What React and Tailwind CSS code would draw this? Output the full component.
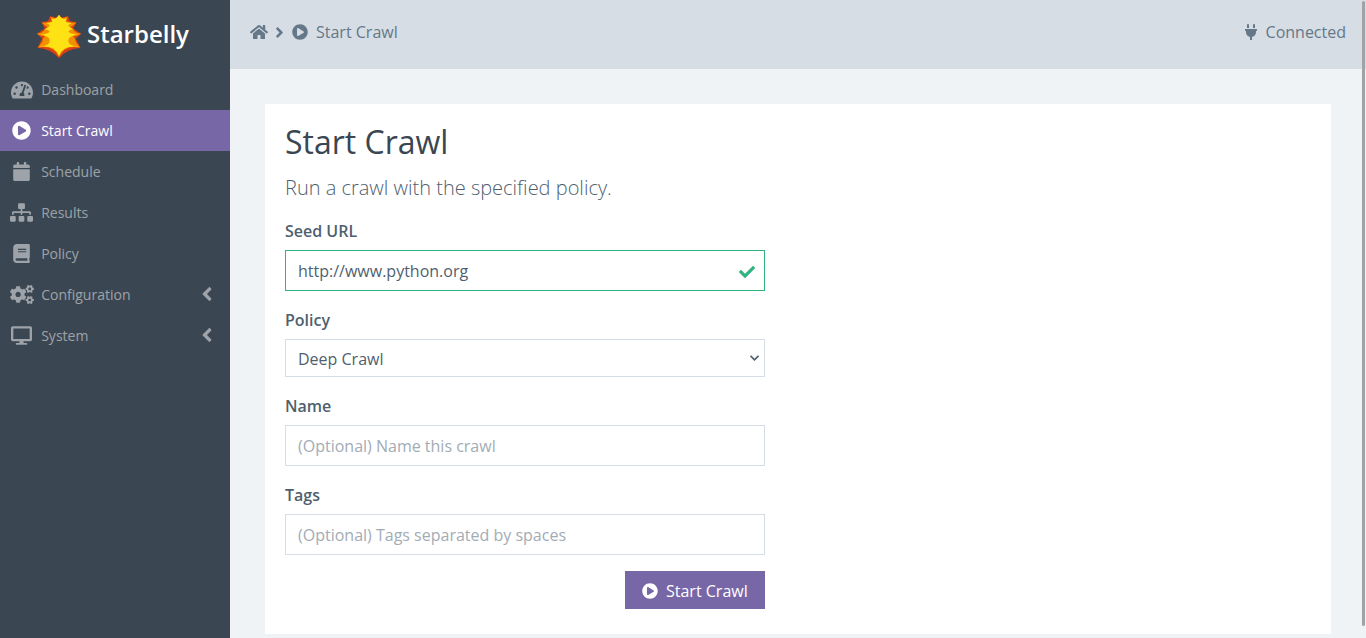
import React from 'react';
import { FaTachometerAlt, FaPlayCircle, FaCalendar, FaSitemap, FaBook, FaCogs, FaDesktop, FaAngleLeft, FaAngleRight, FaHome, FaPlug, FaCheck } from 'react-icons/fa';

const items = [
  { label: 'Dashboard', Icon: FaTachometerAlt, size: 'w-[22px] h-[20px]' },
  { label: 'Start Crawl', Icon: FaPlayCircle, active: true, size: 'w-[19px] h-[19px]' },
  { label: 'Schedule', Icon: FaCalendar, size: 'w-[19px] h-[19px]' },
  { label: 'Results', Icon: FaSitemap, size: 'w-[23px] h-[19px]' },
  { label: 'Policy', Icon: FaBook, size: 'w-[19px] h-[19px]' },
  { label: 'Configuration', Icon: FaCogs, more: true, size: 'w-[24px] h-[19px]' },
  { label: 'System', Icon: FaDesktop, more: true, size: 'w-[21px] h-[19px]' },
];

function Logo() {
  return (
    <svg viewBox="6 11 138 133" className="w-[46px] h-[44px] shrink-0">
      <path fill="#dc3f14" d="M75 14 L68 22 L48 17 L42 32 L22 36 L32 55 L8 71 L24 86 L10 113 Q55 118 75 145 Q95 118 140 113 L126 86 L142 71 L118 55 L128 36 L108 32 L102 17 L82 22 Z" />
      <path fill="#f29100" d="M75 14 L67 24 L49 20 L54 32 Q40 39 23 37 Q30 46 40 50 L33 57 Q24 69 8 71 Q18 78 32 78 Q24 86 25 94 L12 112 Q60 104 75 140 Q90 104 138 112 L125 94 Q126 86 118 78 Q132 78 142 71 Q126 69 117 57 L110 50 Q120 46 127 37 Q110 39 96 32 L101 20 L83 24 Z" />
      <path fill="#ffe214" d="M75 13 Q70 23 63 25 Q58 27 51 24 Q55 31 55 35 Q47 38 36 38 Q46 41 47 46 Q44 53 30 57 Q42 57 47 64 Q43 71 20 73 Q37 76 45 84 Q50 95 41 103 Q32 108 14 111 Q62 103 75 138 Q88 103 136 111 Q118 108 109 103 Q100 95 105 84 Q113 76 130 73 Q107 71 103 64 Q108 57 120 57 Q106 53 103 46 Q104 41 114 38 Q103 38 95 35 Q95 31 99 24 Q92 27 87 25 Q80 23 75 13 Z" />
    </svg>
  );
}

function Field({ label, children, className }) {
  return (
    <label className={'flex flex-col ' + className}>
      <span className="font-semibold leading-6 mb-[7px]">{label}</span>
      {children}
    </label>
  );
}

export default function App() {
  return (
    <div className="flex h-[638px] overflow-hidden bg-[#eff3f6] font-['Open_Sans',sans-serif] text-base text-[#4f5f6f]">
      <aside className="w-[230px] shrink-0 bg-[#3a4651] text-white">
        <div className="flex h-[69px] items-center pl-[36px] pt-[3px]">
          <Logo />
          <span className="ml-[5px] text-[24px] font-semibold leading-none -mt-[5px]">Starbelly</span>
        </div>
        <nav>
          {items.map(({ label, Icon, active, more, size }) => (
            <a key={label} className={'flex h-[41px] items-center pl-[10px] pr-[16px] text-sm ' + (active ? 'bg-[#7867a7] text-white' : 'text-white/50')}>
              <span className="flex w-[23px] shrink-0 justify-center"><Icon className={'shrink-0 ' + size} /></span>
              <span className="ml-[8.2px] flex-1">{label}</span>
              {more && <FaAngleLeft className="mb-[2px] h-[22px] w-[14px]" />}
            </a>
          ))}
        </nav>
      </aside>
      <div className="flex min-w-0 flex-1 flex-col">
        <header className="flex h-[69px] shrink-0 items-center justify-between bg-[#d7dde4] pl-5 pr-5 pb-[5px] text-[#647889]">
          <div className="flex items-center">
            <FaHome className="h-4 w-[18px]" />
            <FaAngleRight className="ml-[6px] h-[17px] w-[11px]" />
            <FaPlayCircle className="ml-[7px] h-4 w-4" />
            <span className="ml-2">Start Crawl</span>
          </div>
          <div className="flex items-center">
            <FaPlug className="h-4 w-[14px]" />
            <span className="ml-[7.4px]">Connected</span>
          </div>
        </header>
        <main className="ml-[35px] mt-[35px] h-[530px] w-[1066px] bg-white px-5 pt-[18px]">
          <h1 className="text-[32px] leading-[40px] text-[#3a4651]">Start Crawl</h1>
          <p className="mt-[11px] text-[20px] font-light leading-[30px]">Run a crawl with the specified policy.</p>
          <form className="mt-4 flex w-[480px] flex-col">
            <Field label="Seed URL" className="">
              <span className="flex h-[41px] items-center justify-between border border-[#2fb480] pl-3 pr-[9px]">
                http://www.python.org
                <FaCheck className="mt-[2px] h-4 w-4 text-[#2fb480]" />
              </span>
            </Field>
            <Field label="Policy" className="mt-[17px]">
              <span className="flex h-[38px] items-center justify-between border border-[#d7dde4] pl-3 pr-[5px]">
                <span className="pt-[2px]">Deep Crawl</span>
                <svg viewBox="0 0 9 6" className="h-[6px] w-[9px]" fill="none" stroke="#4f5f6f" strokeWidth="1.7"><path d="M.5 .8 4.500 4.800 8.500 .8" /></svg>
              </span>
            </Field>
            <Field label="Name" className="mt-[17px]">
              <input className="h-[41px] border border-[#d7dde4] px-3 outline-none placeholder:text-[#a2acb5]" placeholder="(Optional) Name this crawl" />
            </Field>
            <Field label="Tags" className="mt-[17px]">
              <input className="h-[41px] border border-[#d7dde4] px-3 outline-none placeholder:text-[#a2acb5]" placeholder="(Optional) Tags separated by spaces" />
            </Field>
            <button type="button" className="mt-4 flex h-[38px] w-[140px] items-center self-end bg-[#7867a7] pl-[17px] pt-[2px] text-white">
              <FaPlayCircle className="h-4 w-4" />
              <span className="ml-2">Start Crawl</span>
            </button>
          </form>
        </main>
      </div>
      <div className="absolute right-[1px] top-[1px] h-[625px] w-[3px] rounded-full bg-[#a0a3a6]" />
    </div>
  );
}
